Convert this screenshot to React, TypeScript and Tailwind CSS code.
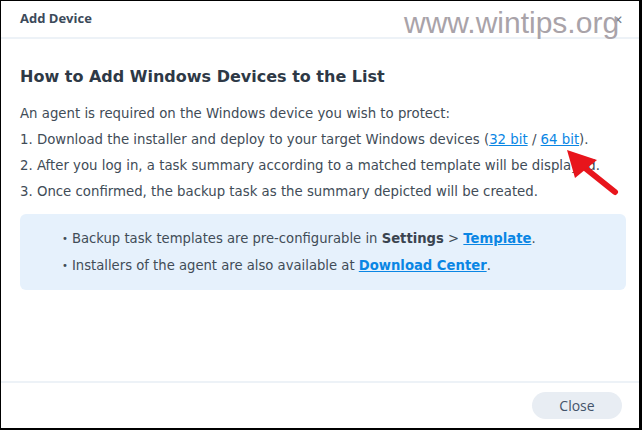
import React from "react";

export default function App() {
  const body = { fontFamily: '"DejaVu Sans", Verdana, sans-serif' };
  return (
    <div className="w-[642px] h-[430px] bg-white border-l border-t border-r-[3px] border-b-2 border-black relative overflow-hidden flex flex-col text-[#414c57]">
      <div className="h-[38px] shrink-0 border-b-2 border-[#edf2f7] flex items-center pl-[19px]">
        <span className="text-[13px] font-bold text-[#3c4a5a]" style={{ fontFamily: '"Open Sans", sans-serif' }}>Add Device</span>
      </div>
      <div className="flex-1 px-[19px] pt-[28px]" style={body}>
        <h1 className="text-[16px] font-bold text-[#2e3946] leading-[20px]">How to Add Windows Devices to the List</h1>
        <div className="mt-[14px] text-[13.3px] leading-[26px]">
          <p>An agent is required on the Windows device you wish to protect:</p>
          <p>
            1. Download the installer and deploy to your target Windows devices (
            <span className="text-[#0a86e4] underline">32 bit</span> /{" "}
            <span className="text-[#0a86e4] underline">64 bit</span>).
          </p>
          <p>2. After you log in, a task summary according to a matched template will be displayed.</p>
          <p>3. Once confirmed, the backup task as the summary depicted will be created.</p>
        </div>
        <div className="mt-[9px] w-[606px] h-[76px] rounded-[6px] bg-[#e6f1fc] flex flex-col justify-center pl-[42px] gap-[8px] text-[13.2px] leading-[19px]">
          <div className="flex items-center">
            <span className="text-[10px] mr-[4px]">•</span>
            <span>
              Backup task templates are pre-configurable in <b className="text-[#3a4450]">Settings</b> &gt;{" "}
              <b className="text-[#0a86e4] underline">Template</b>.
            </span>
          </div>
          <div className="flex items-center">
            <span className="text-[10px] mr-[4px]">•</span>
            <span>
              Installers of the agent are also available at <b className="text-[#0a86e4] underline">Download Center</b>.
            </span>
          </div>
        </div>
      </div>
      <div className="h-[47px] shrink-0 border-t-2 border-[#edf2f7] flex items-center justify-end pr-[17px]">
        <button className="w-[90px] h-[27px] rounded-full bg-[#e8edf3] text-[14px] text-[#43536a]" style={{ fontFamily: '"Open Sans", sans-serif' }}>Close</button>
      </div>
      <span className="absolute left-[612px] top-[10px] text-[12px] text-[#707a85]">✕</span>
      <span className="absolute left-[403px] top-[4px] text-[30px] text-[#a9a3a9] leading-[36px]" style={{ fontFamily: '"Liberation Sans", Arial, sans-serif' }}>www.wintips.org</span>
      <svg className="absolute left-0 top-0" width="642" height="430" viewBox="0 0 642 430">
        <line x1="584" y1="167" x2="614" y2="191" stroke="#e8151c" strokeWidth="6" strokeLinecap="round" />
        <polygon points="566,149 596,159 574,177" fill="#e8151c" />
      </svg>
    </div>
  );
}
